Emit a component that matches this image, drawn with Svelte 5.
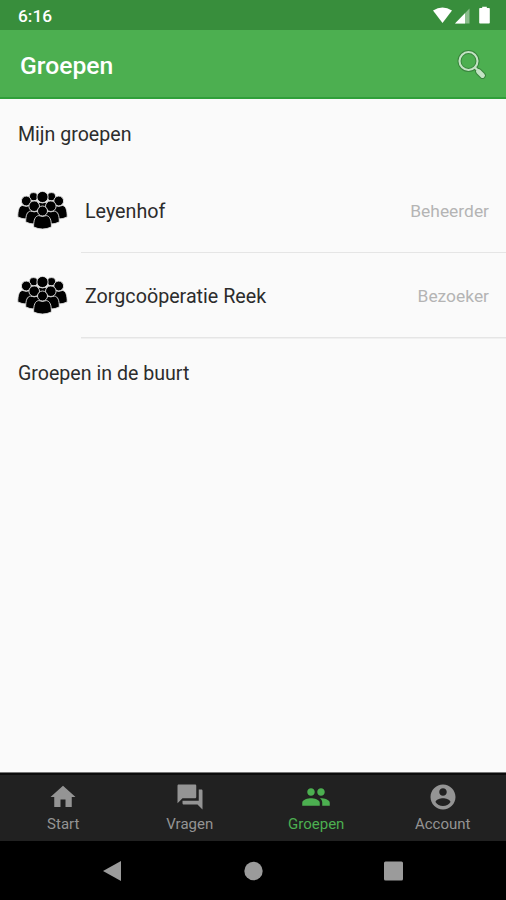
<script>
  const groups = [
    { name: 'Leyenhof', role: 'Beheerder' },
    { name: 'Zorgcoöperatie Reek', role: 'Bezoeker' }
  ];
  const tabs = [
    { label: 'Start', d: 'M10 20v-6h4v6h5v-8h3L12 3 2 12h3v8z' },
    { label: 'Vragen', d: 'M21 6h-2v9H6v2c0 .55.45 1 1 1h11l4 4V7c0-.55-.45-1-1-1zm-4 6V3c0-.55-.45-1-1-1H3c-.55 0-1 .45-1 1v14l4-4h10c.55 0 1-.45 1-1z' },
    { label: 'Groepen', active: true, d: 'M16 11c1.66 0 2.99-1.34 2.99-3S17.66 5 16 5c-1.66 0-3 1.34-3 3s1.34 3 3 3zm-8 0c1.66 0 2.99-1.34 2.99-3S9.66 5 8 5C6.34 5 5 6.34 5 8s1.34 3 3 3zm0 2c-2.33 0-7 1.17-7 3.5V19h14v-2.5c0-2.33-4.67-3.5-7-3.5zm8 0c-.29 0-.62.02-.97.05 1.16.84 1.97 1.97 1.97 3.45V19h6v-2.5c0-2.33-4.67-3.5-7-3.5z' },
    { label: 'Account', d: 'M12 2C6.48 2 2 6.48 2 12s4.48 10 10 10 10-4.48 10-10S17.52 2 12 2zm0 3c1.66 0 3 1.34 3 3s-1.34 3-3 3-3-1.34-3-3 1.34-3 3-3zm0 14.2c-2.5 0-4.71-1.28-6-3.22.03-1.99 4-3.08 6-3.08 1.99 0 5.97 1.09 6 3.08-1.29 1.94-3.5 3.22-6 3.22z' }
  ];
  // Back to front: centre x, head centre y, head radius, body half width, body bottom
  const people = [
    [16.5, 5.7, 4.1, 5, 14], [34.5, 5.7, 4.1, 5, 14],
    [25.5, 6, 5.6, 5.5, 18],
    [9.3, 10, 4.9, 8.5, 28.5], [41.7, 10, 4.9, 8.5, 28.5],
    [17.2, 15.2, 5.3, 8.5, 33.5], [33.8, 15.2, 5.3, 8.5, 33.5],
    [25.5, 20, 5, 8.9, 38.5]
  ];
  const body = ([x, y, r, w, b]) => {
    const t = y + r - 0.4;
    return `M${x - w} ${b - 2.5}C${x - w} ${t + 4} ${x - w + 1.5} ${t + 0.5} ${x - 3.8} ${t}Q${x} ${t + 1.5} ${x + 3.8} ${t}C${x + w - 1.5} ${t + 0.5} ${x + w} ${t + 4} ${x + w} ${b - 2.5}Q${x} ${b + 1.6} ${x - w} ${b - 2.5}Z`;
  };
</script>

<div class="screen">
  <div class="status">
    <span class="time">6:16</span>
    <svg width="60" height="20" viewBox="0 0 60 20" fill="#fff">
      <path d="M1 4.5Q10.500-1.500 20 4.500L10.500 17Z" />
      <path d="M37.500 2.500V17.500H23Z" opacity=".42" />
      <path d="M33 7.200V17.500H23Z" />
      <path d="M48 2h2.200V.8h4.600V2H57q.8 0 .8.800V16.700q0 .8-.8.800h-9q-.8 0-.8-.8V2.800q0-.8.8-.8z" />
    </svg>
  </div>

  <header>
    <h1>Groepen</h1>
    <svg width="32" height="32" viewBox="0 0 32 32" fill="none" stroke-linecap="round">
      <path d="M22.500 22.500l4 4" stroke="#39843d" stroke-width="6.800" />
      <path d="M19 18.500l3 3" stroke="#39843d" stroke-width="4" />
      <circle cx="12.500" cy="12" r="9" stroke="#39843d" stroke-width="4" />
      <circle cx="12.500" cy="12" r="9" stroke="#c3e3c4" stroke-width="2.100" />
      <path d="M19 18.500l3 3" stroke="#c3e3c4" stroke-width="2.200" />
      <path d="M22.500 22.500l4 4" stroke="#c3e3c4" stroke-width="4.800" />
    </svg>
  </header>

  <main>
    <h2>Mijn groepen</h2>
    {#each groups as g}
      <div class="row">
        <svg class="crowd" width="51" height="39" viewBox="0 0 51 39" stroke="#e4e4e4" stroke-width=".9">
          {#each people as p}
            <path d={body(p)} />
            <circle cx={p[0]} cy={p[1]} r={p[2]} />
          {/each}
        </svg>
        <div class="line">
          <span class="name">{g.name}</span>
          <span class="role">{g.role}</span>
        </div>
      </div>
    {/each}
    <h2>Groepen in de buurt</h2>
  </main>

  <nav class="tabs">
    {#each tabs as t}
      <div class="tab" class:active={t.active}>
        <svg width="30" height="30" viewBox="0 0 24 24" fill="currentColor"><path d={t.d} /></svg>
        <span>{t.label}</span>
      </div>
    {/each}
  </nav>

  <div class="system">
    <svg width="20" height="22" viewBox="0 0 20 22"><path d="M0 11L18 1V21Z" /></svg>
    <svg width="20" height="20" viewBox="0 0 20 20"><circle cx="10.500" cy="10" r="9.200" /></svg>
    <svg width="20" height="20" viewBox="0 0 20 20"><rect x="1" y=".5" width="19" height="19" rx="1.500" /></svg>
  </div>
</div>

<style>
  :global(body) { margin: 0; }
  .screen { width: 506px; height: 900px; display: flex; flex-direction: column; background: #fafafa; font-family: Roboto, "Liberation Sans", sans-serif; overflow: hidden; }
  .status { height: 30px; flex: none; box-sizing: border-box; background: #388e3c; padding: 0 14px 0 18px; display: flex; justify-content: space-between; align-items: center; }
  .status svg { margin-top: 1px; }
  .time { color: #fff; font-size: 17.300px; font-weight: 500; line-height: 20px; margin-top: 2px; }
  header { height: 69px; flex: none; box-sizing: border-box; background: #4caf50; border-bottom: 2px solid #2f9f39; padding: 2px 18px 0 20px; display: flex; justify-content: space-between; align-items: center; }
  h1 { margin: 2px 0 0; color: #fff; font-size: 24.700px; font-weight: 500; line-height: 30px; }
  main { flex: 1; }
  h2 { margin: 0; box-sizing: border-box; padding: 1px 18px 0; height: 69px; line-height: 69px; font-size: 19.600px; font-weight: 400; color: #2c2c2c; }
  .row { height: 85px; display: flex; align-items: center; padding-left: 17px; }
  .crowd { flex: none; }
  .line { flex: 1; align-self: stretch; margin-left: 13px; padding: 2px 17px 0 4px; display: flex; align-items: center; justify-content: space-between; border-bottom: 1px solid #e5e5e5; }
  .row:nth-of-type(2) .line { box-shadow: 0 1px #f0f0f0; }
  .name { font-size: 19.700px; color: #2c2c2c; }
  .role { font-size: 17.400px; color: #b4b4b4; }
  .tabs { height: 69px; flex: none; box-sizing: border-box; background: #212121; border-top: 1px solid #777; box-shadow: inset 0 2px #0c0c0c; display: flex; }
  .tab { flex: 1; display: flex; flex-direction: column; align-items: center; padding: 9px 0 0; color: #949494; font-size: 15px; line-height: 18px; }
  .tab span { margin-top: 3px; }
  .tab.active { color: #4caf50; }
  .system { height: 59px; flex: none; background: #000; display: flex; justify-content: center; align-items: center; gap: 120px; fill: #9b9b9b; }
</style>
